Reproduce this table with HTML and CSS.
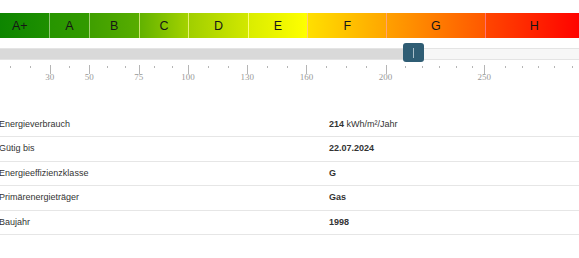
FILE: index.html
```html
<!DOCTYPE html>
<html lang="de">
<head>
<meta charset="utf-8">
<link rel="stylesheet" href="styles.css">
<title>Energieausweis</title>
</head>
<body>
<div class="page">
  <section class="energy">
    <div class="scale">
      <div class="bar">
        <div class="seg s-ap" style="flex-grow:30">A+</div>
        <div class="seg s-a" style="flex-grow:20">A</div>
        <div class="seg s-b" style="flex-grow:25">B</div>
        <div class="seg s-c" style="flex-grow:25">C</div>
        <div class="seg s-d" style="flex-grow:30">D</div>
        <div class="seg s-e" style="flex-grow:30">E</div>
        <div class="seg s-f" style="flex-grow:40">F</div>
        <div class="seg s-g" style="flex-grow:50">G</div>
        <div class="seg s-h" style="flex-grow:50">H</div>
      </div>
      <div class="slider">
        <div class="track"><div class="fill" style="width:71.33%"></div></div>
        <div class="handle" style="left:71.33%"><span class="grip"></span></div>
      </div>
      <div class="ticks">
        <span class="minor" style="left:3.33%"></span>
        <span class="minor" style="left:6.67%"></span>
        <span class="major" style="left:10%"><b>30</b></span>
        <span class="minor" style="left:13.33%"></span>
        <span class="major" style="left:16.67%"><b>50</b></span>
        <span class="minor" style="left:19.67%"></span>
        <span class="minor" style="left:22.67%"></span>
        <span class="major" style="left:25%"><b>75</b></span>
        <span class="minor" style="left:27.67%"></span>
        <span class="minor" style="left:30.67%"></span>
        <span class="major" style="left:33.33%"><b>100</b></span>
        <span class="minor" style="left:36.67%"></span>
        <span class="minor" style="left:40%"></span>
        <span class="major" style="left:43.33%"><b>130</b></span>
        <span class="minor" style="left:46.67%"></span>
        <span class="minor" style="left:50%"></span>
        <span class="major" style="left:53.33%"><b>160</b></span>
        <span class="minor" style="left:56.67%"></span>
        <span class="minor" style="left:60%"></span>
        <span class="minor" style="left:63.33%"></span>
        <span class="major" style="left:66.67%"><b>200</b></span>
        <span class="minor" style="left:70%"></span>
        <span class="minor" style="left:72.83%"></span>
        <span class="minor" style="left:75.67%"></span>
        <span class="minor" style="left:78.5%"></span>
        <span class="minor" style="left:81.33%"></span>
        <span class="major" style="left:83.33%"><b>250</b></span>
        <span class="minor" style="left:86.83%"></span>
        <span class="minor" style="left:89.67%"></span>
        <span class="minor" style="left:92.33%"></span>
        <span class="minor" style="left:95.1%"></span>
        <span class="minor" style="left:98.13%"></span>
      </div>
    </div>
  </section>

  <section class="facts">
    <div class="row"><div class="label">Energieverbrauch</div><div class="value"><b>214</b> kWh/m²/Jahr</div></div>
    <div class="row"><div class="label">Gütig bis</div><div class="value"><b>22.07.2024</b></div></div>
    <div class="row"><div class="label">Energieeffizienzklasse</div><div class="value"><b>G</b></div></div>
    <div class="row"><div class="label">Primärenergieträger</div><div class="value"><b>Gas</b></div></div>
    <div class="row"><div class="label">Baujahr</div><div class="value"><b>1998</b></div></div>
  </section>
</div>
</body>
</html>
```

FILE: styles.css
```css
html, body {
  margin: 0;
  padding: 0;
  background: #fff;
}
body {
  width: 579px;
  height: 258px;
  overflow: hidden;
  font-family: "Liberation Sans", Arial, sans-serif;
  color: #333;
}
.page {
  padding-top: 13px;
}
.energy {
  height: 100px;
}
.scale {
  margin-left: -9.5px;
  width: 592.5px;
  position: relative;
}
.bar {
  display: flex;
  height: 25px;
}
.seg {
  flex-basis: 0;
  display: flex;
  align-items: center;
  justify-content: center;
  font-size: 12.5px;
  color: #161616;
  border-left: 1px solid rgba(255, 255, 255, 0.45);
}
.seg:first-child { border-left: 0; }
.s-ap { background: linear-gradient(90deg, #0a8300, #1f9000); }
.s-a  { background: linear-gradient(90deg, #279500, #339a00); }
.s-b  { background: linear-gradient(90deg, #3f9f00, #58ad00); }
.s-c  { background: linear-gradient(90deg, #62b200, #a4d200); }
.s-d  { background: linear-gradient(90deg, #a0cf00, #d2e800); }
.s-e  { background: linear-gradient(90deg, #daed00, #ffff00); }
.s-f  { background: linear-gradient(90deg, #ffdf00, #ffa600); }
.s-g  { background: linear-gradient(90deg, #ffa000, #ff5800); }
.s-h  { background: linear-gradient(90deg, #ff4600, #ff0000); }

.slider {
  position: relative;
  margin-top: 10px;
  height: 12px;
}
.track {
  height: 10px;
  border: 1px solid #e4e4e4;
  background: #f7f7f7;
  overflow: hidden;
}
.fill {
  height: 100%;
  background: #d9d9d9;
}
.handle {
  position: absolute;
  top: -5px;
  width: 21px;
  height: 19px;
  margin-left: -10.5px;
  background: #2f5d74;
  border-radius: 3px;
  display: flex;
  align-items: center;
  justify-content: center;
}
.grip {
  width: 1px;
  height: 10px;
  background: #a9bec9;
}

.ticks {
  position: relative;
  height: 24px;
}
.ticks span {
  position: absolute;
  width: 1px;
  background: #b5b5b5;
}
.minor {
  top: 6px;
  height: 2px;
}
.major {
  top: 5px;
  height: 9px;
}
.major b {
  position: absolute;
  top: 7px;
  left: 0;
  transform: translateX(-50%);
  font-family: "Liberation Serif", "Times New Roman", serif;
  font-weight: normal;
  font-size: 9px;
  color: #999;
  white-space: nowrap;
}

.facts {
  margin-left: -1px;
  margin-top: -0.25px;
}
.row {
  display: grid;
  grid-template-columns: 330px 1fr;
  height: 23.5px;
  line-height: 23.5px;
  border-bottom: 1px solid #e6e6e6;
  font-size: 9px;
  color: #333;
}
.value b {
  font-weight: bold;
}
```
